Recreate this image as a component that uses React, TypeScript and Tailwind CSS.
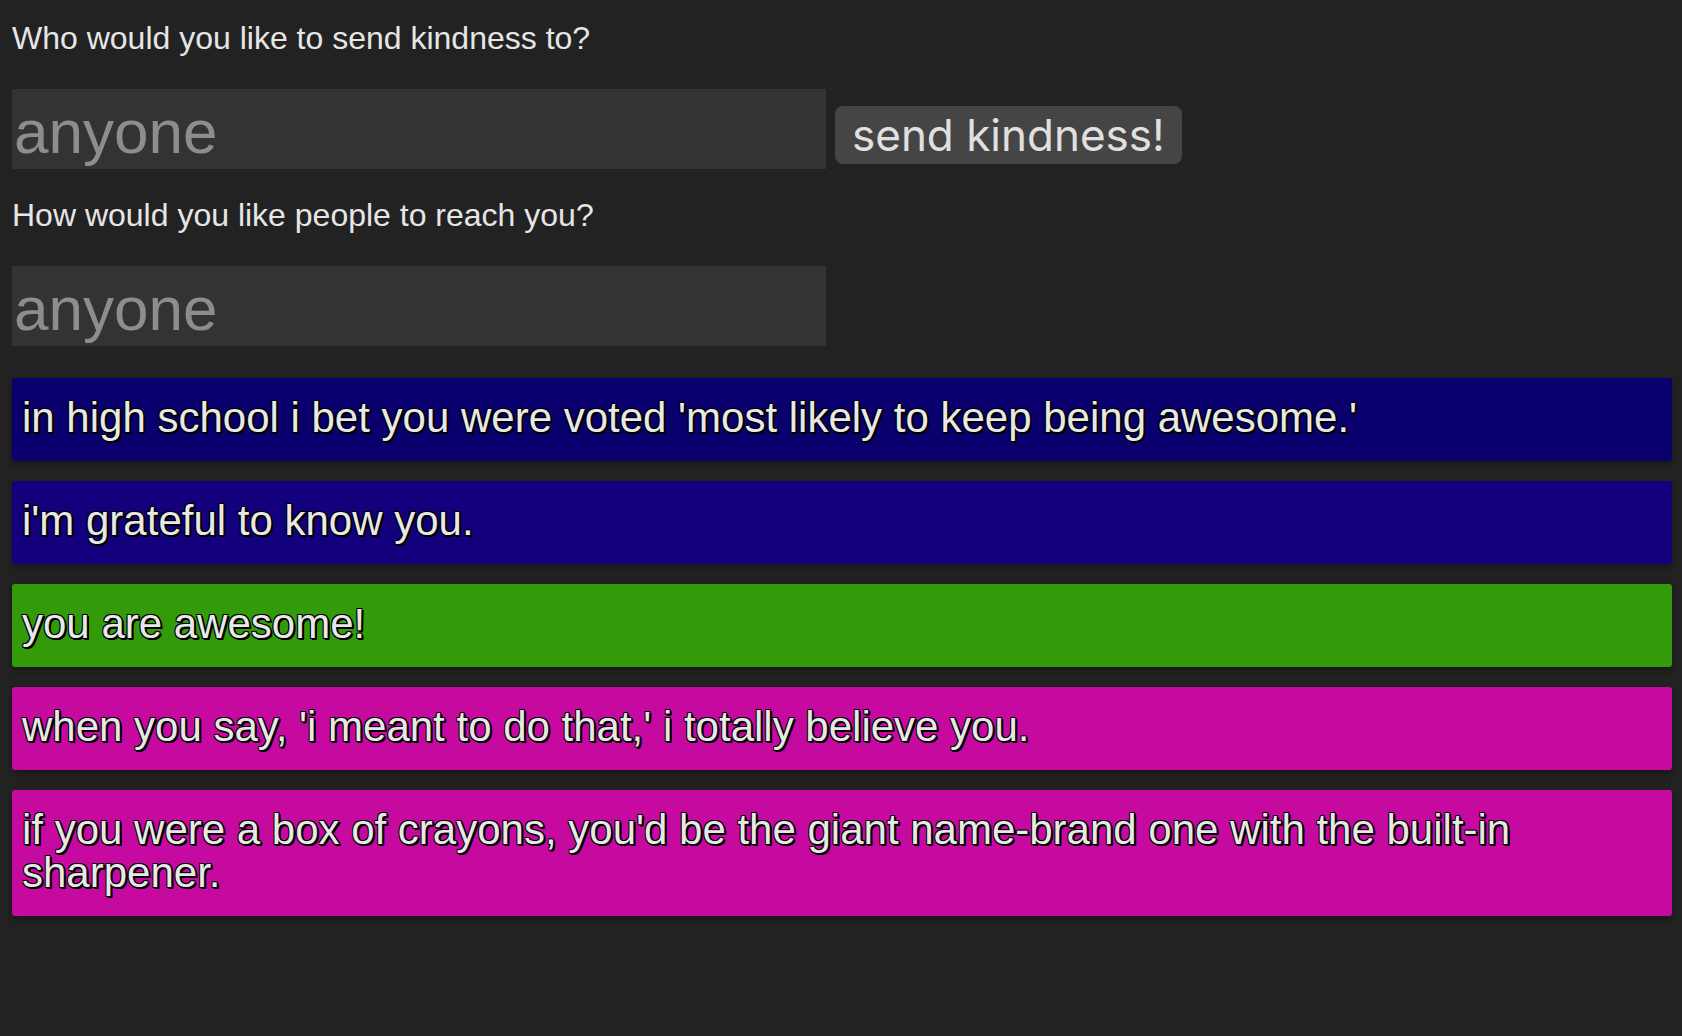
import React, { useState } from 'react'

type Kindness = {
  text: string
  color: string
}

const kindnesses: Kindness[] = [
  {
    text: "in high school i bet you were voted 'most likely to keep being awesome.'",
    color: 'bg-[#09006d]',
  },
  { text: "i'm grateful to know you.", color: 'bg-[#13007c]' },
  { text: 'you are awesome!', color: 'bg-[#339a09]' },
  {
    text: "when you say, 'i meant to do that,' i totally believe you.",
    color: 'bg-[#c60a9f]',
  },
  {
    text: "if you were a box of crayons, you'd be the giant name-brand one with the built-in sharpener.",
    color: 'bg-[#c60a9f]',
  },
]

const App: React.FC = () => {
  const [to, setTo] = useState('')
  const [from, setFrom] = useState('')

  return (
    <div className="min-h-screen bg-[#222222] pl-3 pr-[10px] pt-[20px] pb-10 font-['Liberation_Sans',Arial,sans-serif] text-[#e6e6e6]">
      <p className="text-[32px] leading-[37px]">Who would you like to send kindness to?</p>
      <div className="mt-[32px] flex items-start gap-[9px]">
        <input
          value={to}
          onChange={(e) => setTo(e.target.value)}
          placeholder="anyone"
          className="h-[80px] w-[814px] bg-[#333333] px-[2px] pt-[6px] pb-[2px] text-[62px] leading-[71px] text-[#e6e6e6] outline-none placeholder:text-[#8d8d8d]"
        />
        <button className="mt-[17px] flex h-[58px] items-center rounded-lg bg-[#454545] px-[17px] font-['Inter',sans-serif] text-[44px] leading-none text-[#e0e0e0]">
          send kindness!
        </button>
      </div>

      <p className="mt-[28px] text-[32px] leading-[37px]">How would you like people to reach you?</p>
      <div className="mt-[32px]">
        <input
          value={from}
          onChange={(e) => setFrom(e.target.value)}
          placeholder="anyone"
          className="h-[80px] w-[814px] bg-[#333333] px-[2px] pt-[6px] pb-[2px] text-[62px] leading-[71px] text-[#e6e6e6] outline-none placeholder:text-[#8d8d8d]"
        />
      </div>

      <div className="mt-[32px] flex flex-col gap-[20px]">
        {kindnesses.map((k, i) => (
          <div
            key={i}
            className={`${k.color} rounded-[3px] px-[10px] pt-[18px] pb-[22px] text-[42px] leading-[43px] text-[#e8e8e8] shadow-[0_3px_6px_rgba(0,0,0,0.35)] [text-shadow:-1px_-1px_0_#000,1px_-1px_0_#000,-1px_1px_0_#000,1px_1px_0_#000,2px_2px_0_#000,2px_1px_0_#000,1px_2px_0_#000]`}
          >
            {k.text}
          </div>
        ))}
      </div>
    </div>
  )
}

export default App
